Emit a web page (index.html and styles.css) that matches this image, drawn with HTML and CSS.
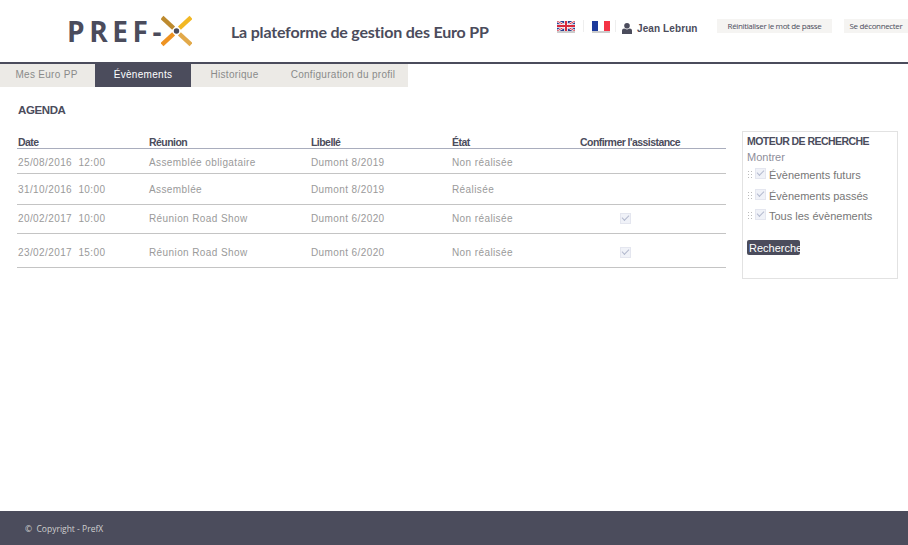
FILE: index.html
```html
<!DOCTYPE html>
<html lang="fr">
<head>
    <meta charset="UTF-8">
    <meta name="viewport" content="width=device-width, initial-scale=1.0">
    <title>Agenda - PrefX</title>
    <link rel="stylesheet" href="styles.css">
</head>
<body>
    <header class="site-header">
        <div class="logo">
            <span class="logo-text">PREF-</span>
            <svg class="logo-mark" width="31" height="32" viewBox="0 0 32 32">
                <path d="M1 2 L13 13" stroke="#bd8a2e" stroke-width="4.5"/>
                <path d="M31 2 L19 13" stroke="#f2b824" stroke-width="4.5"/>
                <path d="M1 30 L13 19" stroke="#ee9322" stroke-width="4.5"/>
                <path d="M31 30 L19 19" stroke="#e2a94a" stroke-width="4.5"/>
                <circle cx="16" cy="16" r="2.8" fill="#4b4c5c"/>
            </svg>
        </div>
        <div class="site-title">La plateforme de gestion des Euro PP</div>
        <div class="user-bar">
            <svg class="flag" width="18" height="12" viewBox="0 0 18 12">
                <rect width="18" height="12" fill="#2b3f8f"/>
                <path d="M0 0 L18 10 M18 0 L0 10" stroke="#fff" stroke-width="2.4"/>
                <path d="M0 0 L18 10 M18 0 L0 10" stroke="#d8283c" stroke-width="0.9"/>
                <path d="M9 0 V10 M0 5 H18" stroke="#fff" stroke-width="3.6"/>
                <path d="M9 0 V10 M0 5 H18" stroke="#d8283c" stroke-width="2"/>
                <rect y="10" width="18" height="2" fill="#ccc"/>
            </svg>
            <span class="flag-sep sep-first"></span>
            <svg class="flag" width="18" height="12" viewBox="0 0 18 12">
                <rect width="6" height="10" fill="#1c3a9c"/>
                <rect x="6" width="6" height="10" fill="#fff"/>
                <rect x="12" width="6" height="10" fill="#f43345"/>
                <rect y="10" width="18" height="2" fill="#ccc"/>
            </svg>
            <span class="flag-sep sep-last"></span>
            <svg class="user-icon" width="10" height="11" viewBox="0 0 10 11">
                <circle cx="5" cy="2.8" r="2.8" fill="#4b4c5c"/>
                <path d="M0 11 V7.5 Q0 5.4 2.2 5.4 L5 6.4 L7.8 5.4 Q10 5.4 10 7.5 V11 Z" fill="#4b4c5c"/>
            </svg>
            <span class="user-name">Jean Lebrun</span>
            <a class="top-btn reset-btn">Réinitialiser le mot de passe</a>
            <a class="top-btn logout-btn">Se déconnecter</a>
        </div>
    </header>

    <nav class="tabs">
        <a class="tab tab-euro">Mes Euro PP</a>
        <a class="tab tab-events active">Évènements</a>
        <a class="tab tab-history">Historique</a>
        <a class="tab tab-config">Configuration du profil</a>
    </nav>

    <main class="content">
        <section class="agenda">
            <h1>AGENDA</h1>
            <table class="agenda-table">
                <thead>
                    <tr>
                        <th class="col-date">Date</th>
                        <th class="col-meeting">Réunion</th>
                        <th class="col-label">Libellé</th>
                        <th class="col-state">État</th>
                        <th class="col-confirm">Confirmer l'assistance</th>
                    </tr>
                </thead>
                <tbody>
                    <tr class="row-a">
                        <td>25/08/2016&nbsp; 12:00</td>
                        <td>Assemblée obligataire</td>
                        <td>Dumont 8/2019</td>
                        <td>Non réalisée</td>
                        <td></td>
                    </tr>
                    <tr class="row-b">
                        <td>31/10/2016&nbsp; 10:00</td>
                        <td>Assemblée</td>
                        <td>Dumont 8/2019</td>
                        <td>Réalisée</td>
                        <td></td>
                    </tr>
                    <tr class="row-c">
                        <td>20/02/2017&nbsp; 10:00</td>
                        <td>Réunion Road Show</td>
                        <td>Dumont 6/2020</td>
                        <td>Non réalisée</td>
                        <td class="cell-check"><input type="checkbox" checked disabled></td>
                    </tr>
                    <tr class="row-d">
                        <td>23/02/2017&nbsp; 15:00</td>
                        <td>Réunion Road Show</td>
                        <td>Dumont 6/2020</td>
                        <td>Non réalisée</td>
                        <td class="cell-check"><input type="checkbox" checked disabled></td>
                    </tr>
                </tbody>
            </table>
        </section>

        <aside class="search-box">
            <h2>MOTEUR DE RECHERCHE</h2>
            <div class="search-show">Montrer</div>
            <label class="search-option"><span class="grip"></span><input type="checkbox" checked disabled>Évènements futurs</label>
            <label class="search-option"><span class="grip"></span><input type="checkbox" checked disabled>Évènements passés</label>
            <label class="search-option"><span class="grip"></span><input type="checkbox" checked disabled>Tous les évènements</label>
            <button class="search-btn">Recherche</button>
        </aside>
    </main>

    <footer class="site-footer">© &nbsp;Copyright - PrefX</footer>
</body>
</html>
```

FILE: styles.css
```css
html, body {
    height: 100%;
}
body {
    margin: 0;
    display: flex;
    flex-direction: column;
    font-family: "Liberation Sans", Arial, sans-serif;
    font-size: 12px;
    color: #9a9a9a;
    background-color: #fff;
    overflow: hidden;
}

/* header */
.site-header {
    display: flex;
    align-items: flex-start;
    height: 62px;
    border-bottom: 2px solid #4b4c5c;
    flex: none;
}
.logo {
    display: flex;
    align-items: center;
    margin: 15px 0 0 67px;
    width: 164px;
}
.logo-text {
    font-family: "Open Sans", sans-serif;
    font-weight: 700;
    font-size: 28px;
    line-height: 32px;
    letter-spacing: 4.6px;
    color: #4b4c5c;
    margin-right: -5px;
}
.logo-mark {
    display: block;
}
.site-title {
    font-family: Lato, sans-serif;
    font-weight: 700;
    font-size: 16px;
    line-height: 22px;
    letter-spacing: -0.2px;
    color: #4b4c5c;
    margin-top: 21px;
    white-space: nowrap;
}
.user-bar {
    position: absolute;
    left: 557px;
    top: 19px;
    display: flex;
    align-items: flex-start;
    white-space: nowrap;
}
.flag {
    display: block;
    margin-top: 2px;
}
.flag-sep {
    width: 1px;
    height: 12px;
    background-color: #eee;
    margin-top: 1px;
}
.sep-first {
    margin-left: 8px;
    margin-right: 8px;
}
.sep-last {
    margin-left: 5px;
}
.user-icon {
    display: block;
    margin: 4px 5px 0 6px;
}
.user-name {
    font-weight: 700;
    font-size: 10px;
    line-height: 18px;
    letter-spacing: 0.1px;
    color: #4b4c5c;
    width: 80px;
    margin-top: 1px;
}
.top-btn {
    font-family: "Open Sans", sans-serif;
    font-size: 8px;
    line-height: 14px;
    height: 14px;
    letter-spacing: -0.35px;
    color: #4b4c5c;
    background-color: #f5f4f2;
    text-align: center;
}
.reset-btn {
    width: 115px;
    margin-right: 12px;
}
.logout-btn {
    width: 64px;
}

/* tabs */
.tabs {
    display: flex;
    width: 408px;
    height: 23px;
    background-color: #eceae6;
    flex: none;
}
.tab {
    line-height: 21px;
    font-size: 10px;
    letter-spacing: 0.3px;
    color: #8a8a8a;
    text-align: center;
}
.tab-euro {
    width: 95px;
    padding-right: 2px;
    box-sizing: border-box;
}
.tab-events {
    width: 96px;
}
.tab-history {
    width: 87px;
}
.tab-config {
    width: 130px;
}
.tab.active {
    background-color: #4b4c5c;
    color: #fff;
}

/* agenda */
.content {
    flex: 1;
    display: flex;
    align-items: flex-start;
}
.agenda {
    width: 709px;
    margin-left: 17px;
}
.agenda h1 {
    margin: 16px 0 0 1px;
    font-size: 11.5px;
    line-height: 14px;
    letter-spacing: -0.4px;
    font-weight: 700;
    color: #4b4c5c;
}
.agenda-table {
    width: 100%;
    margin-top: 15px;
    border-collapse: collapse;
    table-layout: fixed;
    font-size: 10px;
    letter-spacing: 0.4px;
}
.agenda-table th {
    height: 16px;
    padding: 0 0 0 1px;
    text-align: left;
    vertical-align: bottom;
    font-weight: 700;
    font-size: 10.5px;
    letter-spacing: -0.55px;
    line-height: 11px;
    color: #4b4c5c;
    border-bottom: 1px solid #a9adbd;
}
.agenda-table td {
    padding: 0 0 0 1px;
    border-bottom: 1px solid #c4c4c4;
}
.col-date {
    width: 130px;
}
.col-meeting {
    width: 161px;
}
.col-label {
    width: 140px;
}
.col-state {
    width: 127px;
}
.agenda-table .row-a td {
    height: 22px;
    padding-top: 2px;
}
.agenda-table .row-b td {
    height: 30px;
}
.agenda-table .row-c td {
    height: 26px;
    padding-bottom: 2px;
}
.agenda-table .row-d td {
    height: 29px;
    padding-top: 4px;
}
.agenda-table .cell-check {
    padding-left: 41px;
}
.cell-check input {
    display: block;
    margin: 0;
}
input[type="checkbox"] {
    appearance: none;
    box-sizing: border-box;
    width: 11px;
    height: 11px;
    border: 1px solid #e4e6ef;
    background-color: #f0f2f8;
    position: relative;
}
input[type="checkbox"]::after {
    content: "";
    position: absolute;
    left: 1px;
    top: 1px;
    width: 6px;
    height: 3px;
    border-left: 1.5px solid #b3b9ce;
    border-bottom: 1.5px solid #b3b9ce;
    transform: rotate(-45deg);
}

/* search box */
.search-box {
    box-sizing: border-box;
    width: 156px;
    height: 148px;
    margin: 44px 0 0 16px;
    padding: 3px 4px;
    border: 1px solid #e2e2e2;
}
.search-box h2 {
    margin: 0;
    font-size: 10.5px;
    line-height: 13px;
    letter-spacing: -0.55px;
    font-weight: 700;
    color: #4b4c5c;
}
.search-show {
    margin-top: 3px;
    font-size: 11px;
    line-height: 13px;
    color: #8e8e9a;
}
.search-option {
    display: flex;
    align-items: center;
    height: 20px;
    margin-top: 1px;
    font-size: 11px;
    color: #777;
}
.search-option:last-of-type {
    margin-top: 0;
}
.search-option input {
    margin: -4px 3px 0 3px;
}
.grip {
    width: 5px;
    height: 8px;
    margin-top: -2px;
    background-image: radial-gradient(#bbb 1px, transparent 1px);
    background-size: 3px 3px;
}
.search-btn {
    display: block;
    box-sizing: border-box;
    width: 53px;
    height: 15px;
    margin-top: 14px;
    padding: 1px 0 0 2px;
    border: none;
    border-radius: 2px;
    overflow: hidden;
    white-space: nowrap;
    text-align: left;
    font-family: "Liberation Sans", Arial, sans-serif;
    font-size: 11px;
    color: #fff;
    background-color: #4b4c5c;
}

/* footer */
.site-footer {
    flex: none;
    height: 34px;
    padding-left: 25px;
    font-family: "Open Sans", sans-serif;
    font-size: 8.5px;
    line-height: 36px;
    color: #cfcfcf;
    background-color: #4b4c5c;
}
```
